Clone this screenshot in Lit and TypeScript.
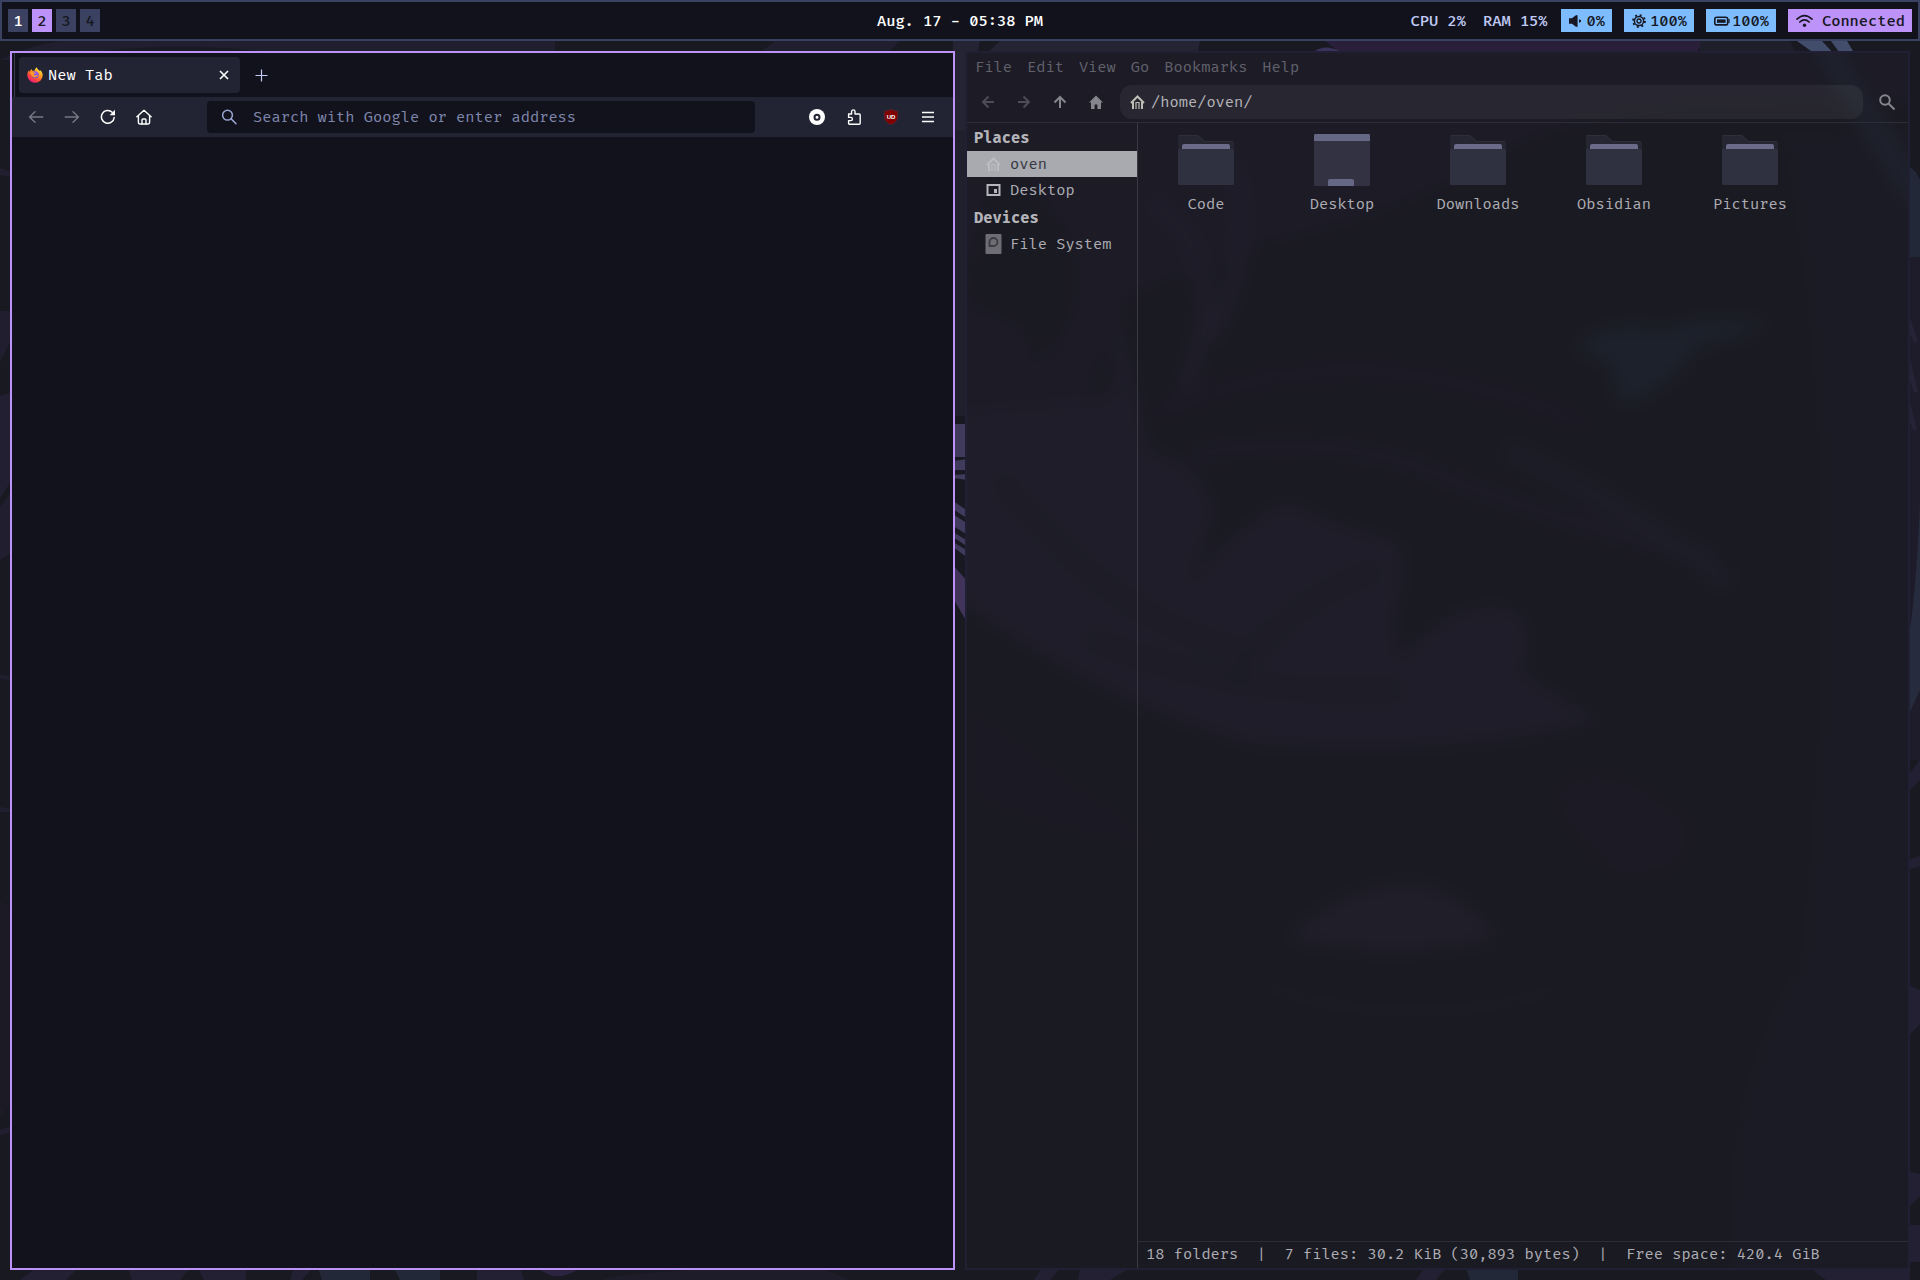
import { LitElement, html, css, svg } from "lit";
import { customElement, property } from "lit/decorators.js";
import { classMap } from "lit/directives/class-map.js";

const base = css`
  *,
  *::before,
  *::after {
    box-sizing: border-box;
  }
  button,
  input {
    font: inherit;
    color: inherit;
    background: none;
    border: 0;
    margin: 0;
    padding: 0;
    min-width: 0;
  }
  button {
    cursor: pointer;
  }
  a {
    color: inherit;
    text-decoration: none;
  }
  svg {
    display: block;
    flex: none;
  }
  .text {
    padding-top: 2px;
  }
`;

/* ---------- Status bar ---------- */

@customElement("status-bar")
export class StatusBar extends LitElement {
  static styles = [
    base,
    css`
      :host {
        display: grid;
        grid-template-columns: 1fr auto 1fr;
        align-items: center;
        padding: 7px 6px;
        border: 2px solid #3b4160;
        background: #11121c;
        color: #ffffff;
      }
      .workspaces {
        display: flex;
        gap: 4px;
      }
      .workspace {
        width: 20px;
        height: 23px;
        background: #3b4160;
        color: #171823;
        text-align: center;
      }
      .workspace.occupied {
        color: #ffffff;
      }
      .workspace.current {
        background: #bd93f9;
        color: #171823;
      }
      .clock,
      .load,
      .badge,
      .workspace {
        font-weight: 500;
      }
      .modules {
        display: flex;
        justify-content: flex-end;
        align-items: center;
        gap: 12px;
      }
      .load {
        display: flex;
        gap: 17px;
        padding-right: 1px;
        color: #c0caf5;
      }
      .badge {
        display: flex;
        align-items: center;
        height: 23px;
        padding: 0 7px 0 8px;
        background: #7dbdff;
        color: #171823;
      }
      .badge svg {
        margin-right: 2px;
      }
      .badge.network {
        background: #bd93f9;
      }
      .badge.network svg {
        margin-right: 9px;
      }
    `,
  ];

  render() {
    const spaces = [
      { n: 1, occupied: true, current: false },
      { n: 2, occupied: true, current: true },
      { n: 3, occupied: false, current: false },
      { n: 4, occupied: false, current: false },
    ];
    return html`
      <nav class="workspaces" aria-label="Workspaces">
        ${spaces.map(
          (s) => html`<button
            class=${classMap({ workspace: true, text: true, occupied: s.occupied, current: s.current })}
          >
            ${s.n}
          </button>`
        )}
      </nav>
      <time class="clock text">Aug. 17 - 05:38 PM</time>
      <div class="modules">
        <div class="load text"><span>CPU 2%</span><span>RAM 15%</span></div>
        <button class="badge">
          <svg width="16" height="16" viewBox="0 0 16 16" fill="currentColor">
            <path d="M0 5.2h3L7.2 2v12L3 10.8H0z" />
            <path d="M7 2.2h1.6v11.6H7z" />
            <path d="M10 6.2l2 1v1.6l-2 1z" />
          </svg>
          <span class="text">0%</span>
        </button>
        <button class="badge">
          <svg width="16" height="16" viewBox="0 0 16 16" fill="none" stroke="currentColor">
            <circle cx="7" cy="8" r="4.6" stroke-width="1.5" />
            <circle cx="7" cy="8" r="2" stroke-width="1.3" />
            <circle cx="7" cy="8" r="6" stroke-width="1.8" stroke-dasharray="2 2.712" />
          </svg>
          <span class="text">100%</span>
        </button>
        <button class="badge">
          <svg width="16" height="16" viewBox="0 0 16 16" fill="currentColor">
            <rect x="0.8" y="4.3" width="12.9" height="7.6" rx="2" fill="none" stroke="currentColor" stroke-width="1.6" />
            <rect x="3" y="6.4" width="8.6" height="3.4" />
            <path d="M14.4 6h1.2v4h-1.2z" />
          </svg>
          <span class="text">100%</span>
        </button>
        <button class="badge network">
          <svg width="17" height="16" viewBox="0 0 17 16" fill="none" stroke="currentColor" stroke-width="1.7" stroke-linecap="round">
            <path d="M1 6.2Q8.5 -1 16 6.2" />
            <path d="M3.8 9Q8.5 4.6 13.2 9" />
            <circle cx="8.5" cy="12.2" r="1.7" fill="currentColor" stroke="none" />
          </svg>
          <span class="text">Connected</span>
        </button>
      </div>
    `;
  }
}

/* ---------- Browser ---------- */

const firefoxLogo = svg`
  <svg width="16" height="16" viewBox="0 0 16 16">
    <defs>
      <linearGradient id="flame" x1="0.85" y1="0.05" x2="0.25" y2="1">
        <stop offset="0" stop-color="#fff44f" />
        <stop offset="0.35" stop-color="#ffa21f" />
        <stop offset="0.65" stop-color="#ff5034" />
        <stop offset="1" stop-color="#e8147f" />
      </linearGradient>
      <radialGradient id="globe" cx="0.6" cy="0.3" r="0.8">
        <stop offset="0" stop-color="#a05cff" />
        <stop offset="1" stop-color="#5b3fd6" />
      </radialGradient>
    </defs>
    <path
      fill="url(#flame)"
      d="M8 15.8A7.7 7.7 0 0 1 .3 8.2C.3 6 1 4.3 2 3.2c0 .7.2 1.2.5 1.5C3 3.7 3.7 2.7 4.8 2.1c-.1.7.1 1.3.6 1.7h2.2C7.700 2.500 8.500.9 9.900.2c.1 1.600 1.500 2.600 2.700 3.600 0 0 .9-.2.900-.6 1.500 1.600 2.200 3.300 2.200 5.100A7.600 7.600 0 0 1 8 15.800z"
    />
    <circle cx="8.2" cy="7.8" r="3.5" fill="url(#globe)" />
    <path
      fill="#ff9a2a"
      d="M3 5.600C4.600 4.400 6 4.700 6.900 5.500h1.900c-.2.900-1.200 1.100-1.700 1.400-.5.500-.1 1.500 1.100 1.600 1 .1 1.700-.6 2.700-.3-.8 2.100-3.200 2.800-5 1.800C4.300 9.100 4 7.100 3 5.600z"
    />
  </svg>
`;

@customElement("browser-window")
export class BrowserWindow extends LitElement {
  static styles = [
    base,
    css`
      :host {
        display: flex;
        flex-direction: column;
        border: 2px solid #bd93f9;
        background: #11121c;
        color: #ffffff;
      }
      .tabs {
        display: flex;
        align-items: center;
        height: 44px;
        padding-left: 2px;
      }
      .edge {
        align-self: stretch;
        width: 1px;
        margin-right: 4px;
        background: #3b3c4e;
      }
      .tab {
        display: flex;
        align-items: center;
        gap: 5px;
        width: 221px;
        height: 36px;
        padding: 0 8px;
        border-radius: 4px;
        background: #222333;
      }
      .tab-title {
        flex: 1;
      }
      .tool {
        display: grid;
        place-items: center;
        width: 32px;
        height: 32px;
      }
      .tab .tool {
        width: 16px;
        height: 16px;
      }
      .new-tab {
        margin-left: 5px;
        color: #c0caf5;
      }
      .toolbar {
        display: flex;
        align-items: center;
        height: 40px;
        padding: 0 9px 0 8px;
        background: #222333;
      }
      .nav,
      .extensions {
        display: flex;
        gap: 4px;
      }
      .nav .tool:disabled {
        color: #777883;
      }
      .address {
        flex: 1;
        display: flex;
        align-items: center;
        gap: 16px;
        height: 32px;
        margin: 0 46px 0 47px;
        padding: 0 14px;
        border-radius: 4px;
        background: #11121c;
        color: #9ba6d3;
      }
      .address input {
        flex: 1;
        outline: 0;
      }
      .address input::placeholder {
        color: #7f86ab;
        opacity: 1;
      }
      .extensions {
        gap: 5px;
      }
      .page {
        flex: 1;
      }
      .shield-text {
        font: bold 6px "Liberation Sans", sans-serif;
        fill: #ffffff;
      }
    `,
  ];

  render() {
    return html`
      <header class="tabs">
        <span class="edge"></span>
        <div class="tab">
          ${firefoxLogo}
          <span class="tab-title text">New Tab</span>
          <button class="tool" aria-label="Close tab">
            <svg width="10" height="10" viewBox="0 0 10 10" stroke="currentColor" stroke-width="1.6">
              <path d="M1 1l8 8M9 1L1 9" />
            </svg>
          </button>
        </div>
        <button class="tool new-tab" aria-label="New tab">
          <svg width="13" height="13" viewBox="0 0 13 13" stroke="currentColor" stroke-width="1.2">
            <path d="M6.5 .5v12M.5 6.5h12" />
          </svg>
        </button>
      </header>
      <div class="toolbar">
        <div class="nav">
          <button class="tool" disabled aria-label="Back">
            <svg width="16" height="16" viewBox="0 0 16 16" fill="none" stroke="currentColor" stroke-width="1.4" stroke-linecap="round" stroke-linejoin="round">
              <path d="M14.8 8H1.5M7 2.7L1.5 8 7 13.3" />
            </svg>
          </button>
          <button class="tool" disabled aria-label="Forward">
            <svg width="16" height="16" viewBox="0 0 16 16" fill="none" stroke="currentColor" stroke-width="1.4" stroke-linecap="round" stroke-linejoin="round">
              <path d="M1.2 8h13.3M9 2.7L14.5 8 9 13.3" />
            </svg>
          </button>
          <button class="tool" aria-label="Reload">
            <svg width="16" height="16" viewBox="0 0 16 16" fill="none" stroke="currentColor" stroke-width="1.5">
              <path d="M14.2 8.5A6.4 6.4 0 1 1 12.2 3.2" stroke-linecap="round" />
              <path d="M15 .8v5.4H9.6z" fill="currentColor" stroke="none" />
            </svg>
          </button>
          <button class="tool" aria-label="Home">
            <svg width="16" height="16" viewBox="0 0 16 16" fill="none" stroke="currentColor" stroke-width="1.4" stroke-linejoin="round" stroke-linecap="round">
              <path d="M.9 7.7L8 1.2l7.1 6.5M2.4 6.6v7q0 1.4 1.4 1.4h8.4q1.4 0 1.4-1.4v-7" />
              <path d="M6 15v-4q0-1 1-1h2q1 0 1 1v4" />
            </svg>
          </button>
        </div>
        <label class="address">
          <svg width="16" height="16" viewBox="0 0 16 16" fill="none" stroke="currentColor" stroke-width="1.5" stroke-linecap="round">
            <circle cx="6.5" cy="6.2" r="4.9" />
            <path d="M10.2 9.9l4.8 4.8" />
          </svg>
          <input class="text" type="text" aria-label="Address" placeholder="Search with Google or enter address" />
        </label>
        <div class="extensions">
          <button class="tool" aria-label="Extension">
            <svg width="16" height="16" viewBox="0 0 16 16">
              <circle cx="8" cy="8" r="8" fill="#ffffff" />
              <circle cx="8" cy="8.200" r="2.500" fill="none" stroke="#222333" stroke-width="2" />
            </svg>
          </button>
          <button class="tool" aria-label="Extensions">
            <svg width="16" height="16" viewBox="0 0 16 16" fill="none" stroke="currentColor" stroke-width="1.4" stroke-linejoin="round">
              <path d="M2.600 5h3V2.600a1.700 1.700 0 0 1 3.400 0V5h4.200q1 0 1 1v8.200q0 1-1 1H3.600q-1 0-1-1v-2.600h2.200a1.600 1.600 0 0 0 0-3.200H2.600z" />
            </svg>
          </button>
          <button class="tool" aria-label="Content blocker">
            <svg width="16" height="16" viewBox="0 0 16 16">
              <path d="M8 .4Q11 2.200 14.600 2.200V8Q14.400 13 8 15.700 1.600 13 1.400 8V2.200Q5 2.200 8 .4z" fill="#800000" stroke="#5e2430" stroke-width="0.8" />
              <text class="shield-text" x="8" y="9.500" text-anchor="middle">UD</text>
            </svg>
          </button>
          <button class="tool" aria-label="Menu">
            <svg width="14" height="14" viewBox="0 0 14 14" stroke="currentColor" stroke-width="1.4">
              <path d="M1 2.500h12M1 7h12M1 11.500h12" />
            </svg>
          </button>
        </div>
      </div>
      <main class="page"></main>
    `;
  }
}

/* ---------- File manager ---------- */

@customElement("place-item")
export class PlaceItem extends LitElement {
  @property() label = "";
  @property() kind: "home" | "desktop" | "disk" = "home";
  @property({ type: Boolean }) selected = false;

  static styles = [
    base,
    css`
      :host {
        display: block;
      }
      .row {
        display: flex;
        align-items: center;
        gap: 8px;
        height: 26px;
        padding-left: 18px;
        color: #acacb2;
      }
      .row svg {
        color: #b5b5bb;
      }
      .row.selected {
        background: #a9aaaf;
        color: #363743;
      }
      .row.selected svg {
        color: #bcbcc2;
      }
    `,
  ];

  private icon() {
    if (this.kind === "home")
      return svg`<svg width="17" height="16" viewBox="0 0 17 16" fill="none" stroke="currentColor" stroke-width="2">
        <path d="M2 9L8.5 2.5 15 9M4 8V15M13 8V15" />
        <path d="M7 15V8.500h3V15" stroke-width="1.2" />
      </svg>`;
    if (this.kind === "desktop")
      return svg`<svg width="17" height="16" viewBox="0 0 17 16" fill="none" stroke="currentColor" stroke-width="2">
        <rect x="2.5" y="3" width="12" height="10" />
        <rect x="9" y="7" width="3" height="4" fill="currentColor" stroke="none" />
      </svg>`;
    return svg`<svg width="17" height="20" viewBox="0 0 17 20">
      <rect x="0.5" y="0" width="16" height="20" rx="1" fill="#6d6d73" />
      <path d="M8.5 4a4 4 0 1 1 0 8H4.5V8a4 4 0 0 1 4-4z" fill="#6d6d73" stroke="#3c3c43" stroke-width="1.8" />
    </svg>`;
  }

  render() {
    return html`<a class=${classMap({ row: true, selected: this.selected })} href="#">
      ${this.icon()}<span class="text">${this.label}</span>
    </a>`;
  }
}

@customElement("file-manager")
export class FileManager extends LitElement {
  static styles = [
    base,
    css`
      :host {
        position: relative;
        display: flex;
        flex-direction: column;
        border: 2px solid #211f33;
        background: #1a1a23;
        color: #acacb2;
      }
      .haze {
        position: absolute;
        inset: 0;
        width: 100%;
        height: 100%;
      }
      .chrome,
      .body {
        position: relative;
      }
      .chrome {
        border-bottom: 1px solid #2d2c38;
      }
      .menu {
        display: flex;
        gap: 15px;
        height: 28px;
        padding-left: 8px;
        color: #61616b;
      }
      .toolbar {
        display: flex;
        align-items: center;
        height: 41px;
        padding: 0 3px;
      }
      .tool {
        display: grid;
        place-items: center;
        width: 36px;
        height: 34px;
        color: #85858d;
      }
      .tool:disabled {
        color: #4d4d57;
      }
      .path {
        flex: 1;
        display: flex;
        align-items: center;
        gap: 5px;
        height: 34px;
        margin: 0 6px;
        padding: 0 9px;
        border-radius: 12px;
        background: rgba(255, 255, 255, 0.055);
        color: #b4b4b9;
      }
      .path svg {
        color: #bdbfb2;
      }
      .path input {
        flex: 1;
        outline: 0;
      }
      .body {
        flex: 1;
        display: flex;
      }
      .sidebar {
        width: 171px;
        border-right: 1px solid #3a3944;
      }
      .heading {
        margin: 0;
        height: 28px;
        padding-left: 7px;
        font-size: 15px;
        line-height: 28px;
        font-weight: bold;
        color: #b4b4b9;
      }
      .content {
        flex: 1;
        display: flex;
        flex-direction: column;
      }
      .files {
        flex: 1;
        display: flex;
        flex-wrap: wrap;
        align-content: flex-start;
        margin: 0;
        padding: 9px 0 0;
        list-style: none;
      }
      .file {
        display: flex;
        flex-direction: column;
        align-items: center;
        gap: 5px;
        width: 136px;
      }
      .status {
        height: 27px;
        padding-left: 8px;
        border-top: 1px solid #2d2c38;
        line-height: 26px;
        white-space: pre;
      }
    `,
  ];

  private haze() {
    return svg`<svg class="haze" viewBox="967 53 941 1215" preserveAspectRatio="none">
      <defs>
        <filter id="soft" x="-10%" y="-10%" width="120%" height="120%" color-interpolation-filters="sRGB">
          <feGaussianBlur stdDeviation="9" />
        </filter>
      </defs>
      <g filter="url(#soft)">
        <rect x="900" y="0" width="1080" height="1340" fill="#1a1a22" />
        <path d="M900 0H1980V110Q1600 90 1500 160 1380 230 1250 250L1130 300 1080 420 900 440z" fill="#1c1b26" />
        <path d="M1000 170Q1100 240 1060 330L1010 400Q1080 330 967 300z" fill="#1a1a22" />
        <path d="M1150 200Q1240 260 1180 400M1230 160Q1260 250 1210 340" fill="none" stroke="#1e1d29" stroke-width="20" />
        <path d="M900 415Q1060 405 1110 395L1120 300 1150 450Q1200 460 1216 510 1200 560 1190 590 1230 520 1290 500 1320 520 1400 540 1410 570 1395 620L1400 660Q1450 590 1520 610 1540 650 1520 670L1605 722Q1450 760 1250 745 1080 700 900 560z" fill="#1e1d29" />
        <path d="M1155 415Q1300 350 1440 380T1580 430" fill="none" stroke="#1c1a25" stroke-width="24" />
        <path d="M1190 455Q1330 430 1440 475T1720 560" fill="none" stroke="#1c1b26" stroke-width="28" />
        <path d="M1505 450Q1640 510 1730 585" fill="none" stroke="#1d1d28" stroke-width="24" />
        <path d="M1575 348Q1590 326 1640 325L1665 330Q1700 312 1770 322 1740 340 1700 346 1660 400 1620 405L1610 365z" fill="#1d212b" />
        <path d="M1780 130Q1850 480 1800 960 1700 1120 1740 1340H1980V130z" fill="#1b1b25" />
        <path d="M1000 480Q1110 620 1240 650M1230 680Q1300 590 1380 570M1090 640Q1250 700 1400 690" fill="none" stroke="#1b1b24" stroke-width="10" />
        <path d="M967 700Q1080 780 1180 855 1060 840 967 800z" fill="#1b1a24" />
        <path d="M1550 790Q1600 740 1690 820 1700 880 1620 880 1570 850 1550 790z" fill="#1c1a24" />
        <path d="M1285 940Q1340 880 1420 882 1480 900 1500 940 1400 965 1285 940z" fill="#1f1e29" />
        <path d="M1260 985Q1400 1035 1560 990" fill="none" stroke="#1b1b26" stroke-width="16" />
        <path d="M1820 40L1920 200" stroke="#1e212c" stroke-width="24" />
      </g>
    </svg>`;
  }

  private folder(name: string) {
    return name === "Desktop"
      ? svg`<svg width="56" height="56" viewBox="0 0 56 56">
          <path d="M0 2h56v50.500q0 1.500-1.500 1.500h-53Q0 54 0 52.500z" fill="#323243" />
          <path d="M0 9V3.500Q0 2 1.500 2h53Q56 2 56 3.500V9z" fill="#666785" />
          <path d="M14 54v-5q0-2 2-2h22q2 0 2 2v5z" fill="#666785" />
        </svg>`
      : svg`<svg width="56" height="56" viewBox="0 0 56 56">
          <path d="M0 20V4.500Q0 3 1.500 3H19q2 0 3.500 2l2.500 3q1 1 2.500 1h27Q56 9 56 10.500V20z" fill="#262632" />
          <path d="M0.500 4.500Q.5 3.500 1.500 3.500H19q2 0 3.500 2l2.500 3q1 1 2.500 1h27" fill="none" stroke="#2f2f39" />
          <path d="M4 18v-4q0-2 2-2h44q2 0 2 2v4z" fill="#6c6c8a" />
          <path d="M0 18.500Q0 17 1.500 17h53q1.500 0 1.500 1.500v33q0 1.500-1.500 1.500h-53Q0 53 0 51.500z" fill="#2f3040" />
        </svg>`;
  }

  render() {
    return html`
      ${this.haze()}
      <header class="chrome">
        <nav class="menu">
          ${["File", "Edit", "View", "Go", "Bookmarks", "Help"].map(
            (m) => html`<button class="text">${m}</button>`
          )}
        </nav>
        <div class="toolbar">
          <button class="tool" disabled aria-label="Back">
            <svg width="14" height="14" viewBox="0 0 14 14" fill="none" stroke="currentColor" stroke-width="2">
              <path d="M13 7H2M7.5 1.5L2 7l5.5 5.5" />
            </svg>
          </button>
          <button class="tool" disabled aria-label="Forward">
            <svg width="14" height="14" viewBox="0 0 14 14" fill="none" stroke="currentColor" stroke-width="2">
              <path d="M1 7h11M6.5 1.5L12 7l-5.5 5.5" />
            </svg>
          </button>
          <button class="tool" aria-label="Up">
            <svg width="14" height="14" viewBox="0 0 14 14" fill="none" stroke="currentColor" stroke-width="2">
              <path d="M7 13V2M1.5 7.5L7 2l5.5 5.5" />
            </svg>
          </button>
          <button class="tool" aria-label="Home">
            <svg width="16" height="16" viewBox="0 0 16 16" fill="currentColor">
              <path d="M8 1.5L1 8.5h2V15h3.600v-4.500h2.800V15H13V8.500h2z" />
            </svg>
          </button>
          <label class="path">
            <svg width="17" height="16" viewBox="0 0 17 16" fill="none" stroke="currentColor" stroke-width="2">
              <path d="M2 9L8.5 2.5 15 9M4 8V15M13 8V15" />
              <path d="M7 15V8.500h3V15" stroke-width="1.2" />
            </svg>
            <input class="text" type="text" aria-label="Location" .value=${"/home/oven/"} />
          </label>
          <button class="tool" aria-label="Search">
            <svg width="18" height="18" viewBox="0 0 18 18" fill="none" stroke="currentColor" stroke-width="2">
              <circle cx="7" cy="7" r="4.8" />
              <path d="M10.5 10.5l6 6" />
            </svg>
          </button>
        </div>
      </header>
      <div class="body">
        <aside class="sidebar">
          <h2 class="heading text">Places</h2>
          <place-item label="oven" kind="home" selected></place-item>
          <place-item label="Desktop" kind="desktop"></place-item>
          <h2 class="heading text">Devices</h2>
          <place-item label="File System" kind="disk"></place-item>
        </aside>
        <section class="content">
          <ul class="files">
            ${["Code", "Desktop", "Downloads", "Obsidian", "Pictures"].map(
              (f) => html`<li class="file">${this.folder(f)}<span class="text">${f}</span></li>`
            )}
          </ul>
          <footer class="status">18 folders  |  7 files: 30.2 KiB (30,893 bytes)  |  Free space: 420.4 GiB</footer>
        </section>
      </div>
    `;
  }
}

/* ---------- Desktop ---------- */

const wallpaper = svg`
  <svg class="wallpaper" viewBox="0 0 1920 1280" preserveAspectRatio="xMidYMid slice">
    <rect width="1920" height="1280" fill="#191922" />
    <g fill="#211f2f">
      <path d="M0 60Q40 41 70 41H420V60z" />
      <path d="M390 41H555V60H390z" />
      <path d="M775 41H900L880 60H750z" />
      <path d="M1000 41H1200L1196 60H980z" fill="#252434" />
      <path d="M0 168L12 172V177L0 175z" />
      <path d="M0 311H12V338L0 362z" />
      <path d="M0 396L12 392V480L0 498z" fill="#231f33" />
      <path d="M0 508L12 490V552L0 560z" />
      <path d="M0 675L12 677V680L0 679zM0 807L12 809V812L0 812zM0 1130L12 1126V1132L0 1135z" />
      <path d="M0 900L12 910V1100L0 1120z" fill="#1b1a25" />
      <path d="M953 41H980L966 110H953z" fill="#252434" />
      <path d="M953 110L968 95V135L953 170z" fill="#252434" />
      <path d="M953 130H968V416H953z" fill="#201f2c" />
    </g>
    <path d="M100 51Q180 42 260 51z" fill="#1a1a24" />
    <path d="M1325 41H1705L1690 60H1350z" fill="#291f3a" />
    <path d="M1315 51Q1325 44 1340 51z" fill="#3a325a" />
    <path d="M1700 41H1790L1800 60H1700z" fill="#1f1e2b" />
    <path d="M1797 41H1822L1836 56H1818zM1831 41H1847L1856 56H1842z" fill="#424d6b" />
    <g fill="#403a5c">
      <path d="M953 424H968V457H953zM953 461L968 459V470H953zM953 475L968 474V480L953 478z" />
      <path d="M953 501L968 511V519L953 509zM953 514L968 524V535L953 526zM953 532L968 541V547L953 537zM953 542L968 551V558L953 547z" />
      <path d="M953 565L968 582V624L953 598z" fill="#40345a" />
    </g>
    <path d="M1908 166Q1916 170 1920 180V257H1908z" fill="#232839" />
    <path d="M1908 257H1920V760H1908z" fill="#1e1c2a" />
    <path d="M1920 500Q1916 600 1908 640V716L1920 690z" fill="#262b3e" />
    <path d="M1908 312L1918 342H1914L1908 330zM1908 350L1918 392H1914L1908 375zM1908 395L1917 430H1913L1908 415z" fill="#262337" />
    <g fill="#232034">
      <path d="M1908 775L1920 760V780L1908 792zM1908 860L1920 856V866L1908 870zM1908 985L1920 990V1024L1908 1036z" />
      <path d="M1908 1171L1920 1174V1196L1908 1208zM1908 1225H1920V1262H1908z" />
      <path d="M20 1280L36 1268H78L66 1280zM128 1268H190L180 1280H132zM198 1268H246V1280H204zM294 1268H312L302 1280H290z" />
      <path d="M477 1268H520L524 1280H477zM1034 1280L1042 1268H1060L1050 1280zM1080 1268H1130L1110 1280H1078zM1424 1268H1446L1436 1280H1416zM1810 1268H1910V1280H1826z" />
    </g>
    <path d="M318 1268H370V1280H322zM394 1268H440V1280H400zM1466 1268H1518V1280H1470z" fill="#232838" />
    <path d="M536 1268H580Q566 1278 552 1276z" fill="#2b2340" />
    <path d="M600 1280Q640 1268 820 1268L850 1280z" fill="#1d1c28" />
  </svg>
`;

@customElement("app-root")
export class AppRoot extends LitElement {
  static styles = [
    base,
    css`
      :host {
        position: relative;
        display: flex;
        flex-direction: column;
        min-height: 100vh;
        overflow: hidden;
        box-sizing: border-box;
        background: #191922;
        font: 15px/20px "Fira Code", "DejaVu Sans Mono", "Liberation Mono", monospace;
      }
      .wallpaper {
        position: absolute;
        inset: 0;
        width: 100%;
        height: 100%;
      }
      status-bar {
        position: relative;
      }
      .tiles {
        position: relative;
        flex: 1;
        display: grid;
        grid-template-columns: 1fr 1fr;
        gap: 10px;
        padding: 10px;
      }
    `,
  ];

  render() {
    return html`
      ${wallpaper}
      <status-bar></status-bar>
      <div class="tiles">
        <browser-window></browser-window>
        <file-manager></file-manager>
      </div>
    `;
  }
}
